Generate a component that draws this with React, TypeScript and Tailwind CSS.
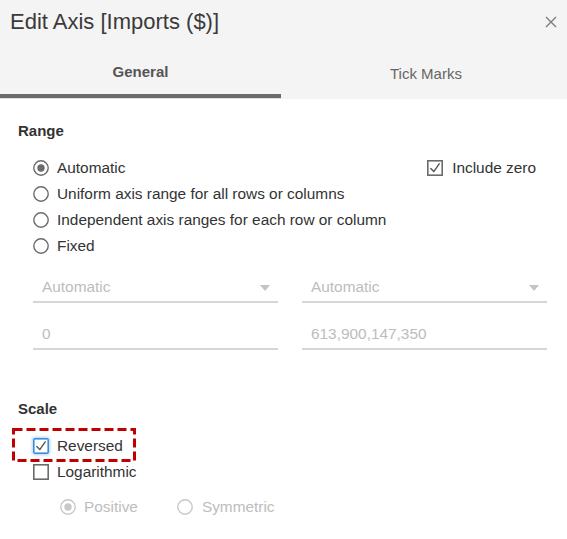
import React from 'react';

const font = { fontFamily: '"Liberation Sans", Arial, sans-serif' };

const Radio = ({ checked, disabled }: { checked?: boolean; disabled?: boolean }) => {
  const ring = disabled ? '#c8c8c8' : '#6b6b6b';
  const dot = disabled ? '#c8c8c8' : '#6b6b6b';
  return (
    <svg width="16" height="16" viewBox="0 0 16 16" className="shrink-0">
      <circle cx="8" cy="8" r="7.2" fill="white" stroke={ring} strokeWidth="1.4" />
      {checked && <circle cx="8" cy="8" r="3.7" fill={dot} />}
    </svg>
  );
};

const Checkbox = ({ checked, focused }: { checked?: boolean; focused?: boolean }) => (
  <svg
    width="16"
    height="16"
    viewBox="0 0 16 16"
    className={focused ? 'shrink-0 rounded-[2px] shadow-[0_0_3px_1px_rgba(80,160,230,0.45)]' : 'shrink-0'}
  >
    <rect x="0.8" y="0.8" width="14.4" height="14.4" fill="white" stroke={focused ? '#3a8fd8' : '#6b6b6b'} strokeWidth="1.6" />
    {checked && (
      <path d="M3.8 8.4 L6.8 11.6 L12.2 3.8" fill="none" stroke="#555" strokeWidth="1.4" strokeLinecap="round" strokeLinejoin="round" />
    )}
  </svg>
);

const RadioRow = ({ label, checked }: { label: string; checked?: boolean }) => (
  <div className="h-[26px] flex items-center gap-[8px]">
    <Radio checked={checked} />
    <span className="text-[15.4px] text-[#333]">{label}</span>
  </div>
);

const SelectBox = ({ value }: { value: string }) => (
  <div className="h-[32px] flex items-center justify-between pl-[9px] pr-[8px] border-b-2 border-[#d6d6d6]">
    <span className="text-[15.4px] text-[#bdbdbd] pt-[2px]">{value}</span>
    <svg width="10" height="6" viewBox="0 0 10 6" className="mt-[4px]">
      <path d="M0 0 H10 L5 6 Z" fill="#c4c4c4" />
    </svg>
  </div>
);

const InputBox = ({ value }: { value: string }) => (
  <div className="h-[32px] flex items-center pl-[9px] border-b-2 border-[#d6d6d6]">
    <span className="text-[15.4px] text-[#bdbdbd] pt-[2px]">{value}</span>
  </div>
);

export default function App() {
  return (
    <div className="w-[567px] h-[539px] bg-white overflow-hidden" style={font}>
      {/* header */}
      <div className="bg-[#f4f4f4] h-[99px] flex flex-col">
        <div className="h-[44px] flex items-center justify-between pl-[10px] pr-[8px]">
          <h1 className="text-[22px] font-normal text-[#3a3a3a] leading-none">Edit Axis [Imports ($)]</h1>
          <svg width="12" height="12" viewBox="0 0 12 12" className="mr-[2px]">
            <path d="M1 1 L11 11 M11 1 L1 11" stroke="#7a7a7a" strokeWidth="1.3" />
          </svg>
        </div>
        <div className="flex h-[55px]">
          <div className="w-[281px] flex flex-col">
            <div className="flex-1 flex items-center justify-center pt-[6px] text-[15px] font-bold text-[#555]">General</div>
            <div className="h-[4px] bg-[#6b6b6b]" />
            <div className="h-[1px] bg-[#dedede]" />
          </div>
          <div className="flex-1 flex flex-col">
            <div className="flex-1 flex items-center justify-center pt-[6px] pl-[4px] text-[15px] text-[#666]">Tick Marks</div>
          </div>
        </div>
      </div>

      {/* body */}
      <div className="pt-[22px]">
        <div className="pl-[18px] h-[20px] flex items-center text-[15px] font-bold text-[#333]">Range</div>

        <div className="mt-[14px] pl-[33px] pr-[31px] flex">
          <div className="flex flex-col">
            <RadioRow label="Automatic" checked />
            <RadioRow label="Uniform axis range for all rows or columns" />
            <RadioRow label="Independent axis ranges for each row or column" />
            <RadioRow label="Fixed" />
          </div>
          <div className="ml-auto h-[26px] flex items-center gap-[9px]">
            <Checkbox checked />
            <span className="text-[15.4px] text-[#333]">Include zero</span>
          </div>
        </div>

        <div className="mt-[12px] pl-[33px] pr-[20px] grid grid-cols-2 gap-x-[24px] gap-y-[15px]">
          <SelectBox value="Automatic" />
          <SelectBox value="Automatic" />
          <InputBox value="0" />
          <InputBox value="613,900,147,350" />
        </div>

        <div className="mt-[49px] pl-[18px] h-[20px] flex items-center text-[15px] font-bold text-[#333]">Scale</div>

        <div className="mt-[14px] relative">
          <svg width="124" height="34" viewBox="0 0 124 34" className="absolute left-[12px] top-[-5px]">
            <rect x="1.5" y="1.5" width="121" height="31" fill="none" stroke="#c00000" strokeWidth="3" strokeDasharray="9 4" />
          </svg>
          <div className="relative pl-[33px] h-[26px] flex items-center gap-[8px]">
            <Checkbox checked focused />
            <span className="text-[15.4px] text-[#333]">Reversed</span>
          </div>
        </div>
        <div className="pl-[33px] h-[26px] flex items-center gap-[8px]">
          <Checkbox />
          <span className="text-[15.4px] text-[#333]">Logarithmic</span>
        </div>

        <div className="mt-[9px] pl-[60px] h-[26px] flex items-center">
          <div className="flex items-center gap-[8px]">
            <Radio checked disabled />
            <span className="text-[15.4px] text-[#bdbdbd]">Positive</span>
          </div>
          <div className="ml-[39px] flex items-center gap-[9px]">
            <Radio disabled />
            <span className="text-[15.4px] text-[#bdbdbd]">Symmetric</span>
          </div>
        </div>
      </div>
    </div>
  );
}
